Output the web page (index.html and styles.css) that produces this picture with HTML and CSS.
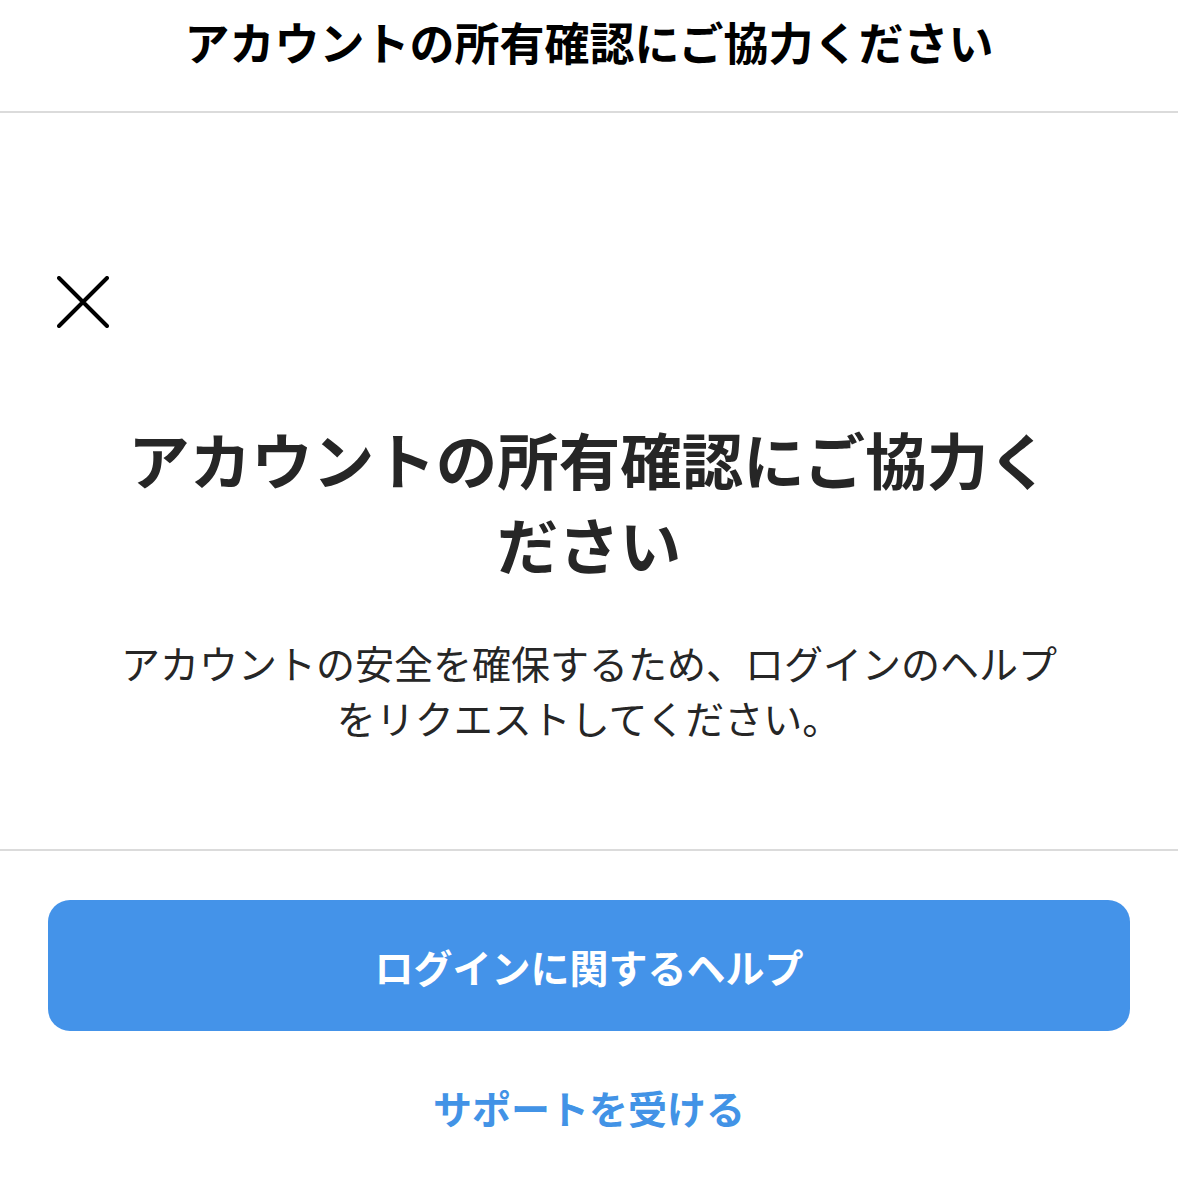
FILE: index.html
```html
<!DOCTYPE html>
<html lang="ja">
<head>
    <meta charset="UTF-8">
    <meta name="viewport" content="width=device-width, initial-scale=1.0">
    <title>アカウントの所有確認</title>
    <link rel="stylesheet" href="styles.css">
</head>
<body>

<header class="topbar">
    <h1 class="topbar-title">アカウントの所有確認にご協力ください</h1>
</header>

<section class="content">
    <button class="close" type="button" aria-label="閉じる">
        <svg width="52" height="52" viewBox="0 0 52 52" fill="none" stroke="#000" stroke-width="4" stroke-linecap="round">
            <path d="M2 2 L50 50 M50 2 L2 50"/>
        </svg>
    </button>

    <h2 class="heading">アカウントの所有確認にご協力ください</h2>
    <p class="desc">アカウントの安全を確保するため、ログインのヘルプをリクエストしてください。</p>
</section>

<footer class="actions">
    <button class="primary" type="button">ログインに関するヘルプ</button>
    <a class="link" href="#">サポートを受ける</a>
</footer>

</body>
</html>
```

FILE: styles.css
```css
* { margin: 0; padding: 0; box-sizing: border-box; }
body { background: #fff; color: #262626; font-family: "Noto Sans CJK JP", "Noto Sans", sans-serif; }

/* top bar */
.topbar {
    height: 113px;
    padding-top: 12px;
    border-bottom: 2px solid #dbdbdb;
    text-align: center;
}
.topbar-title { font-size: 45px; line-height: 60px; font-weight: 700; color: #000; }

/* main text */
.content {
    padding: 163px 0 104px;
    text-align: center;
    border-bottom: 2px solid #dbdbdb;
}
.close {
    display: block;
    margin-left: 57px;
    width: 52px;
    height: 52px;
    border: none;
    background: none;
    cursor: pointer;
}
.close svg { display: block; }

.heading {
    margin: 88px auto 0;
    width: 940px;
    font-size: 61.5px;
    line-height: 85px;
    font-weight: 700;
    color: #262626;
}
.desc {
    margin: 49px auto 0;
    width: 940px;
    font-size: 39px;
    line-height: 55px;
    color: #262626;
}

/* buttons */
.actions { padding: 49px 48px 0; text-align: center; }
.primary {
    display: block;
    width: 100%;
    height: 131px;
    border: none;
    border-radius: 22px;
    background: #4493e9;
    color: #fff;
    font-family: inherit;
    font-size: 39px;
    font-weight: 700;
    cursor: pointer;
}
.link {
    display: inline-block;
    margin-top: 49px;
    font-size: 39px;
    line-height: 55px;
    font-weight: 700;
    color: #4293e6;
    text-decoration: none;
}
```
